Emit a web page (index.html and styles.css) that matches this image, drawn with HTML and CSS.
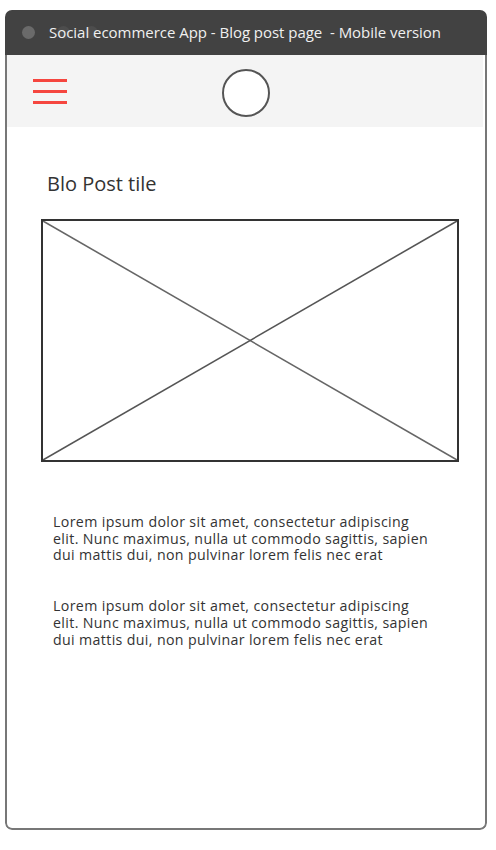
FILE: index.html
```html
<!DOCTYPE html>
<html>
<head>
<meta charset="utf-8">
<link rel="stylesheet" href="styles.css">
</head>
<body>
<div class="window">
  <div class="titlebar">
    <span class="dot"></span>
    <span class="dot faint"></span>
    <span class="dot faint"></span>
    <span class="title">Social ecommerce App - Blog post page&nbsp; - Mobile version</span>
  </div>
  <div class="frame">
    <div class="header">
      <div class="burger"><span></span><span></span><span></span></div>
      <div class="logo"></div>
    </div>
    <div class="content">
      <h1 class="post-title">Blo Post tile</h1>
      <div class="image">
        <svg viewBox="0 0 418 243" preserveAspectRatio="none" width="100%" height="100%">
          <line x1="0" y1="0" x2="418" y2="243" stroke="#666" stroke-width="1.6"/>
          <line x1="0" y1="243" x2="418" y2="0" stroke="#555" stroke-width="1.6"/>
        </svg>
      </div>
      <p class="text">Lorem ipsum dolor sit amet, consectetur adipiscing<br>elit. Nunc maximus, nulla ut commodo sagittis, sapien<br>dui mattis dui, non pulvinar lorem felis nec erat</p>
      <p class="text">Lorem ipsum dolor sit amet, consectetur adipiscing<br>elit. Nunc maximus, nulla ut commodo sagittis, sapien<br>dui mattis dui, non pulvinar lorem felis nec erat</p>
    </div>
  </div>
</div>
</body>
</html>
```
FILE: styles.css
```css
* { box-sizing: border-box; }
html, body { margin: 0; padding: 0; background: #fff; }
body { font-family: "Open Sans", "Noto Sans", sans-serif; }

.window {
  margin: 10px 0 0 5px;
  width: 482px;
  height: 820px;
  border-radius: 7px;
  overflow: hidden;
  display: flex;
  flex-direction: column;
  background: #fff;
}

.titlebar {
  height: 45px;
  background: #424242;
  display: flex;
  align-items: center;
  position: relative;
  padding-left: 17px;
  padding-bottom: 1px;
  flex-shrink: 0;
}
.dot {
  width: 13px;
  height: 13px;
  border-radius: 50%;
  background: #6a6a6a;
  flex-shrink: 0;
}
.dot.faint {
  position: absolute;
  background: #4d4d4d;
  top: 16px;
}
.dot.faint:nth-child(2) { left: 52px; }
.dot.faint:nth-child(3) { left: 80px; }
.title {
  position: relative;
  margin-left: 14px;
  color: #f0f0f0;
  font-size: 15px;
  letter-spacing: -0.03px;
  white-space: nowrap;
}

.frame {
  flex: 1;
  border: 2px solid #777;
  border-top: none;
  border-radius: 0 0 7px 7px;
  display: flex;
  flex-direction: column;
  padding-right: 2px;
}

.header {
  height: 72px;
  background: #f4f4f4;
  display: flex;
  align-items: center;
  position: relative;
  padding-left: 26px;
}
.burger {
  display: flex;
  flex-direction: column;
  gap: 8px;
  width: 34px;
}
.burger span {
  display: block;
  height: 3px;
  background: #f5463f;
}
.logo {
  position: absolute;
  left: 215px;
  top: 14px;
  width: 48px;
  height: 48px;
  border: 2px solid #555;
  border-radius: 50%;
  background: #fff;
}

.content {
  padding: 44px 0 0 34px;
}
.post-title {
  margin: 0 0 22px 6px;
  font-weight: normal;
  font-size: 20px;
  color: #333;
  line-height: 26px;
}
.image {
  width: 418px;
  height: 243px;
  border: 2px solid #333;
  margin-bottom: 52px;
}
.image svg { display: block; }
.text {
  margin: 0 0 34px 12px;
  width: 420px;
  font-size: 14.2px;
  letter-spacing: 0.36px;
  line-height: 16.7px;
  color: #333;
  white-space: nowrap;
}
```
